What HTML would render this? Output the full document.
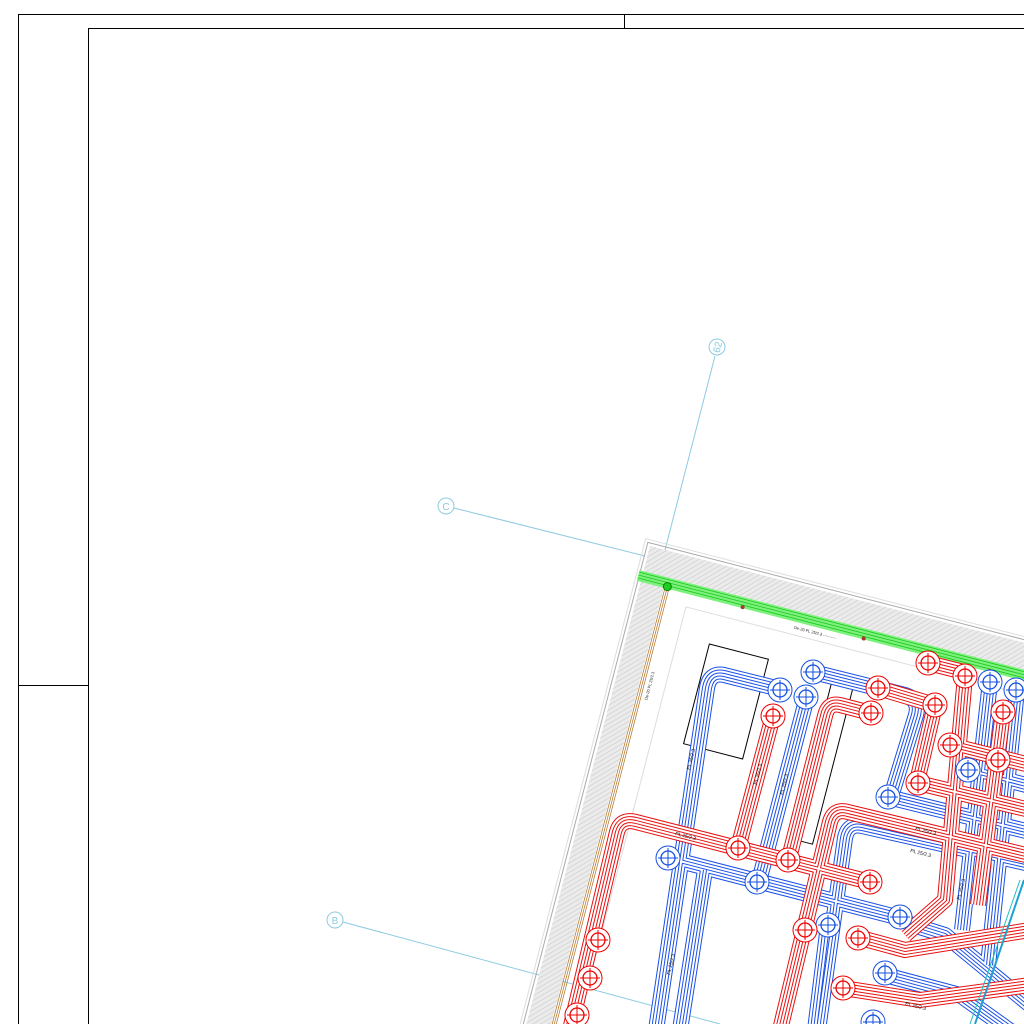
<!DOCTYPE html>
<html><head><meta charset="utf-8"><style>
html,body{margin:0;padding:0;background:#fff;width:1024px;height:1024px;overflow:hidden}
svg{display:block;overflow:hidden}
.pr use{fill:none;stroke-linejoin:round;stroke-linecap:butt}
</style></head><body>
<svg width="1024" height="1024" viewBox="0 0 1024 1024" xmlns="http://www.w3.org/2000/svg">
<defs>
<clipPath id="cp"><rect width="1024" height="1024"/></clipPath>
<pattern id="h" width="4" height="4" patternUnits="userSpaceOnUse" patternTransform="rotate(45)">
<rect width="4" height="4" fill="#ebebeb"/><line x1="0" y1="0" x2="0" y2="4" stroke="#c4c4c4" stroke-width="1"/>
</pattern>
<path id="b1" d="M784,690 L724,675 Q710,672 707,688 L656,1030"/>
<path id="b2" d="M813,672 L905,695 Q920,700 916,715 L890,800"/>
<path id="b3" d="M807,697 L758,885"/>
<path id="b4" d="M668,858 L900,918"/>
<path id="b5" d="M705,870 L680,1030"/>
<path id="b6" d="M1030,864 L862,826 Q848,823 845,838 L818,1030"/>
<path id="b7" d="M897,920 L945,935 L1030,1005"/>
<path id="b7b" d="M885,975 L960,995 L1030,1045"/>
<path id="b8" d="M990,682 L962,930"/>
<path id="b9" d="M1017,690 L988,965"/>
<path id="b10" d="M888,797 L1030,832"/>
<path id="b11" d="M968,770 L1030,786"/>
<path id="b12" d="M828,925 L815,1030"/>
<path id="r1" d="M773,716 L738,848"/>
<path id="r2" d="M871,713 L840,705 Q828,702 825,716 L788,862"/>
<path id="r3" d="M570,1030 L617,832 Q621,818 636,822 L870,882"/>
<path id="r5" d="M780,1030 L830,822 Q834,808 848,812 L1030,856"/>
<path id="r6" d="M965,676 L945,900 L905,935"/>
<path id="r6b" d="M928,663 L968,673"/>
<path id="r7" d="M918,783 L1030,810"/>
<path id="r8" d="M950,745 L1030,765"/>
<path id="r9" d="M857,937 L905,950 L1030,930"/>
<path id="r10" d="M843,988 L920,1000 L1030,985"/>
<path id="r13" d="M1003,712 L978,905"/>
<path id="r14" d="M878,688 L935,705 L915,790"/>
<g id="rc"><circle r="12" fill="#fff" stroke="#e00" stroke-width="1"/><circle r="7" fill="none" stroke="#e00" stroke-width="1.3"/><path d="M-10,0H10M0,-10V10" stroke="#e00" stroke-width="1"/></g>
<g id="bc"><circle r="12" fill="#fff" stroke="#1550e0" stroke-width="1"/><circle r="7" fill="none" stroke="#1550e0" stroke-width="1.3"/><path d="M-10,0H10M0,-10V10" stroke="#1550e0" stroke-width="1"/></g>
</defs>
<g clip-path="url(#cp)">
<g fill="none" stroke="#000" stroke-width="1">
<path d="M18.5,1024 V14.5 H1024"/>
<path d="M624.5,14 V28"/>
<path d="M88.5,1024 V28.5 H1024"/>
<path d="M18,685.5 H88"/>
</g>

<g stroke="#8ccbe2" stroke-width="1" fill="none">
<line x1="715" y1="356" x2="665" y2="550"/>
<circle cx="717" cy="347" r="8"/>
<line x1="454" y1="508" x2="645" y2="556"/>
<circle cx="446" cy="506" r="8"/>
<line x1="343" y1="922" x2="720" y2="1024"/>
<circle cx="335" cy="920" r="8"/>
</g>
<g fill="#8ccbe2" font-family="Liberation Sans,sans-serif" font-size="10" text-anchor="middle">
<text x="717" y="351" transform="rotate(-76 717 347)">62</text>
<text x="446" y="510">C</text>
<text x="335" y="924">B</text>
</g>

<g transform="translate(650 546) rotate(14.5)">
<rect x="-6" y="-6" width="700" height="700" fill="none" stroke="#ddd" stroke-width="1"/>
<rect x="-3" y="-3" width="700" height="700" fill="none" stroke="#aaa" stroke-width="1"/>
<rect x="0" y="0" width="700" height="26" fill="url(#h)"/>
<rect x="0" y="0" width="24" height="700" fill="url(#h)"/>
<rect x="-4" y="26" width="700" height="11" fill="#7ef07e"/>
<path d="M-4,28H700M-4,31H700M-4,34H700" stroke="#18c818" stroke-width="0.8"/>
<path d="M25,37V700M27,37V700M29,37V700" stroke="#b07020" stroke-width="0.7"/>
<rect x="50" y="50" width="640" height="640" fill="none" stroke="#ddd" stroke-width="1"/>
<circle cx="27" cy="35" r="4" fill="#2c2" stroke="#080"/>
<g fill="#a33"><circle cx="105" cy="36" r="2"/><circle cx="230" cy="36" r="2"/><circle cx="360" cy="36" r="2"/></g>
<g font-family="Liberation Sans,sans-serif" font-size="4" fill="#222">
<text x="160" y="44">De-20 FL 25/2.3 ----------</text>
<text x="290" y="44">De-20 FL 25/2.3 ----------</text>
<text x="36" y="150" transform="rotate(-90 36 150)">De-20 PL 25/2.3</text>
</g>
<rect x="82" y="80" width="61" height="103" fill="none" stroke="#000" stroke-width="1"/>
<rect x="210" y="78" width="22" height="170" fill="none" stroke="#000" stroke-width="1"/>
</g>

<g class="pr">
<g stroke="#1a4fe6">
<use href="#b1" stroke-width="16"/><use href="#b2" stroke-width="16"/><use href="#b3" stroke-width="16"/><use href="#b4" stroke-width="16"/><use href="#b5" stroke-width="16"/><use href="#b6" stroke-width="16"/><use href="#b7" stroke-width="16"/><use href="#b7b" stroke-width="16"/><use href="#b8" stroke-width="16"/><use href="#b9" stroke-width="16"/><use href="#b10" stroke-width="16"/><use href="#b11" stroke-width="16"/><use href="#b12" stroke-width="16"/>
</g>
<g stroke="#fff">
<use href="#b1" stroke-width="14"/><use href="#b2" stroke-width="14"/><use href="#b3" stroke-width="14"/><use href="#b4" stroke-width="14"/><use href="#b5" stroke-width="14"/><use href="#b6" stroke-width="14"/><use href="#b7" stroke-width="14"/><use href="#b7b" stroke-width="14"/><use href="#b8" stroke-width="14"/><use href="#b9" stroke-width="14"/><use href="#b10" stroke-width="14"/><use href="#b11" stroke-width="14"/><use href="#b12" stroke-width="14"/>
</g>
<g stroke="#1a4fe6">
<use href="#b1" stroke-width="10"/><use href="#b2" stroke-width="10"/><use href="#b3" stroke-width="10"/><use href="#b4" stroke-width="10"/><use href="#b5" stroke-width="10"/><use href="#b6" stroke-width="10"/><use href="#b7" stroke-width="10"/><use href="#b7b" stroke-width="10"/><use href="#b8" stroke-width="10"/><use href="#b9" stroke-width="10"/><use href="#b10" stroke-width="10"/><use href="#b11" stroke-width="10"/><use href="#b12" stroke-width="10"/>
</g>
<g stroke="#fff">
<use href="#b1" stroke-width="8"/><use href="#b2" stroke-width="8"/><use href="#b3" stroke-width="8"/><use href="#b4" stroke-width="8"/><use href="#b5" stroke-width="8"/><use href="#b6" stroke-width="8"/><use href="#b7" stroke-width="8"/><use href="#b7b" stroke-width="8"/><use href="#b8" stroke-width="8"/><use href="#b9" stroke-width="8"/><use href="#b10" stroke-width="8"/><use href="#b11" stroke-width="8"/><use href="#b12" stroke-width="8"/>
</g>
<g stroke="#1a4fe6">
<use href="#b1" stroke-width="4"/><use href="#b2" stroke-width="4"/><use href="#b3" stroke-width="4"/><use href="#b4" stroke-width="4"/><use href="#b5" stroke-width="4"/><use href="#b6" stroke-width="4"/><use href="#b7" stroke-width="4"/><use href="#b7b" stroke-width="4"/><use href="#b8" stroke-width="4"/><use href="#b9" stroke-width="4"/><use href="#b10" stroke-width="4"/><use href="#b11" stroke-width="4"/><use href="#b12" stroke-width="4"/>
</g>
<g stroke="#fff">
<use href="#b1" stroke-width="2"/><use href="#b2" stroke-width="2"/><use href="#b3" stroke-width="2"/><use href="#b4" stroke-width="2"/><use href="#b5" stroke-width="2"/><use href="#b6" stroke-width="2"/><use href="#b7" stroke-width="2"/><use href="#b7b" stroke-width="2"/><use href="#b8" stroke-width="2"/><use href="#b9" stroke-width="2"/><use href="#b10" stroke-width="2"/><use href="#b11" stroke-width="2"/><use href="#b12" stroke-width="2"/>
</g>

<g stroke="#e81010">
<use href="#r1" stroke-width="16"/><use href="#r2" stroke-width="16"/><use href="#r3" stroke-width="16"/><use href="#r5" stroke-width="16"/><use href="#r6" stroke-width="16"/><use href="#r6b" stroke-width="16"/><use href="#r7" stroke-width="16"/><use href="#r8" stroke-width="16"/><use href="#r9" stroke-width="16"/><use href="#r10" stroke-width="16"/><use href="#r13" stroke-width="16"/><use href="#r14" stroke-width="16"/>
</g>
<g stroke="#fff">
<use href="#r1" stroke-width="14"/><use href="#r2" stroke-width="14"/><use href="#r3" stroke-width="14"/><use href="#r5" stroke-width="14"/><use href="#r6" stroke-width="14"/><use href="#r6b" stroke-width="14"/><use href="#r7" stroke-width="14"/><use href="#r8" stroke-width="14"/><use href="#r9" stroke-width="14"/><use href="#r10" stroke-width="14"/><use href="#r13" stroke-width="14"/><use href="#r14" stroke-width="14"/>
</g>
<g stroke="#e81010">
<use href="#r1" stroke-width="10"/><use href="#r2" stroke-width="10"/><use href="#r3" stroke-width="10"/><use href="#r5" stroke-width="10"/><use href="#r6" stroke-width="10"/><use href="#r6b" stroke-width="10"/><use href="#r7" stroke-width="10"/><use href="#r8" stroke-width="10"/><use href="#r9" stroke-width="10"/><use href="#r10" stroke-width="10"/><use href="#r13" stroke-width="10"/><use href="#r14" stroke-width="10"/>
</g>
<g stroke="#fff">
<use href="#r1" stroke-width="8"/><use href="#r2" stroke-width="8"/><use href="#r3" stroke-width="8"/><use href="#r5" stroke-width="8"/><use href="#r6" stroke-width="8"/><use href="#r6b" stroke-width="8"/><use href="#r7" stroke-width="8"/><use href="#r8" stroke-width="8"/><use href="#r9" stroke-width="8"/><use href="#r10" stroke-width="8"/><use href="#r13" stroke-width="8"/><use href="#r14" stroke-width="8"/>
</g>
<g stroke="#e81010">
<use href="#r1" stroke-width="4"/><use href="#r2" stroke-width="4"/><use href="#r3" stroke-width="4"/><use href="#r5" stroke-width="4"/><use href="#r6" stroke-width="4"/><use href="#r6b" stroke-width="4"/><use href="#r7" stroke-width="4"/><use href="#r8" stroke-width="4"/><use href="#r9" stroke-width="4"/><use href="#r10" stroke-width="4"/><use href="#r13" stroke-width="4"/><use href="#r14" stroke-width="4"/>
</g>
<g stroke="#fff">
<use href="#r1" stroke-width="2"/><use href="#r2" stroke-width="2"/><use href="#r3" stroke-width="2"/><use href="#r5" stroke-width="2"/><use href="#r6" stroke-width="2"/><use href="#r6b" stroke-width="2"/><use href="#r7" stroke-width="2"/><use href="#r8" stroke-width="2"/><use href="#r9" stroke-width="2"/><use href="#r10" stroke-width="2"/><use href="#r13" stroke-width="2"/><use href="#r14" stroke-width="2"/>
</g>
</g>

<path d="M1024,880 L975,1024" stroke="#20a0d0" stroke-width="2" fill="none"/>
<path d="M1020,880 L970,1024" stroke="#20c0c0" stroke-width="1" fill="none"/>

<g>
<use href="#bc" x="780" y="690"/><use href="#bc" x="806" y="697"/><use href="#bc" x="813" y="672"/><use href="#bc" x="888" y="797"/><use href="#bc" x="668" y="858"/><use href="#bc" x="757" y="882"/><use href="#bc" x="900" y="917"/><use href="#bc" x="885" y="973"/><use href="#bc" x="968" y="770"/><use href="#bc" x="990" y="682"/><use href="#bc" x="1016" y="690"/><use href="#bc" x="828" y="925"/><use href="#bc" x="873" y="1022"/>
<use href="#rc" x="928" y="663"/><use href="#rc" x="965" y="676"/><use href="#rc" x="773" y="716"/><use href="#rc" x="871" y="713"/><use href="#rc" x="878" y="688"/><use href="#rc" x="935" y="705"/><use href="#rc" x="950" y="745"/><use href="#rc" x="918" y="783"/><use href="#rc" x="738" y="848"/><use href="#rc" x="788" y="860"/><use href="#rc" x="870" y="882"/><use href="#rc" x="598" y="940"/><use href="#rc" x="590" y="978"/><use href="#rc" x="577" y="1015"/><use href="#rc" x="805" y="930"/><use href="#rc" x="858" y="938"/><use href="#rc" x="843" y="988"/><use href="#rc" x="1003" y="712"/><use href="#rc" x="998" y="760"/>
</g>

<g font-family="Liberation Sans,sans-serif" font-size="5" fill="#111">
<text x="690" y="770" transform="rotate(-76 690 770)">PL 25/2.3</text>
<text x="757" y="785" transform="rotate(-76 757 785)">PL 25/2.3</text>
<text x="783" y="795" transform="rotate(-76 783 795)">PL 25/2.3</text>
<text x="675" y="835" transform="rotate(14 675 835)">PL 25/2.3</text>
<text x="910" y="852" transform="rotate(14 910 852)">PL 25/2.3</text>
<text x="915" y="830" transform="rotate(14 915 830)">PL 25/2.3</text>
<text x="670" y="975" transform="rotate(-76 670 975)">PL 25/2.3</text>
<text x="960" y="900" transform="rotate(-76 960 900)">PL 25/2.3</text>
<text x="905" y="1005" transform="rotate(14 905 1005)">PL 25/2.3</text>
</g>
</g>
</svg>
</body></html>
